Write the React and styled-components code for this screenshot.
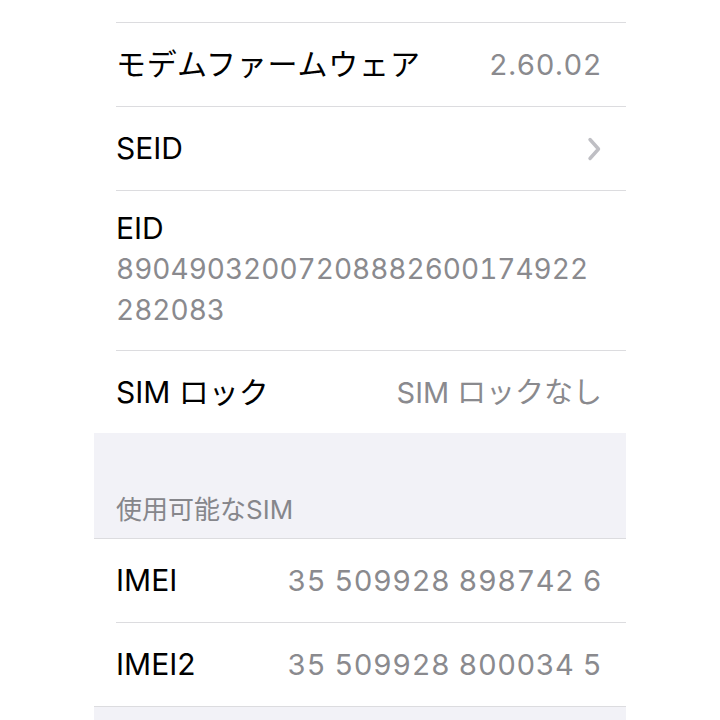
import React from 'react';
import styled, { createGlobalStyle } from 'styled-components';

const GlobalStyle = createGlobalStyle`
  body {
    margin: 0;
    background: #ffffff;
    font-family: 'Inter', 'Noto Sans CJK JP', sans-serif;
    -webkit-font-smoothing: antialiased;
  }
`;

const Chevron = () => (
  <svg width="16" height="26" viewBox="0 0 16 26" fill="none">
    <path
      d="M4 3.5 L12.5 13 L4 22.5"
      stroke="#bfbfc4"
      strokeWidth="3.4"
      strokeLinecap="round"
      strokeLinejoin="round"
    />
  </svg>
);

const App = () => {
  return (
    <Page>
      <GlobalStyle />
      <Screen>
        <Group>
          <Row>
            <Cell $height={22} />
          </Row>
          <Row>
            <Cell>
              <Label $spacing={0.8}>モデムファームウェア</Label>
              <Value $spacing={0.5}>2.60.02</Value>
            </Cell>
          </Row>
          <Row>
            <Cell>
              <Label>SEID</Label>
              <Chevron />
            </Cell>
          </Row>
          <Row>
            <StackCell>
              <Label>EID</Label>
              <LongValue>
                <span>89049032007208882600174922</span>
                <span>282083</span>
              </LongValue>
            </StackCell>
          </Row>
          <Row>
            <Cell $last $height={82}>
              <Label>SIM ロック</Label>
              <Value>SIM ロックなし</Value>
            </Cell>
          </Row>
        </Group>

        <SectionHeader>使用可能なSIM</SectionHeader>

        <Group $bordered>
          <Row>
            <Cell>
              <Label>IMEI</Label>
              <Value $spacing={0.5}>35 509928 898742 6</Value>
            </Cell>
          </Row>
          <Row>
            <Cell $last>
              <Label>IMEI2</Label>
              <Value $spacing={0.5}>35 509928 800034 5</Value>
            </Cell>
          </Row>
        </Group>
        <Footer />
      </Screen>
    </Page>
  );
};
export default App;

const Page = styled.div`
  width: 720px;
  height: 720px;
  overflow: hidden;
  background: #ffffff;
  display: flex;
`;

const Screen = styled.div`
  margin-left: 94px;
  width: 532px;
  display: flex;
  flex-direction: column;
  background: #f2f2f7;
`;

const Group = styled.div`
  background: #ffffff;
  display: flex;
  flex-direction: column;
  border-top: ${({ $bordered }) => ($bordered ? '1px solid #dcdcdf' : 'none')};
  border-bottom: ${({ $bordered }) => ($bordered ? '1px solid #dcdcdf' : 'none')};
`;

const Row = styled.div`
  padding-left: 22px;
`;

const Cell = styled.div`
  height: ${({ $height }) => ($height ? `${$height}px` : '83px')};
  display: flex;
  align-items: center;
  justify-content: space-between;
  padding-right: 24px;
  border-bottom: ${({ $last }) => ($last ? 'none' : '1px solid #dcdcdf')};
`;

const StackCell = styled.div`
  display: flex;
  flex-direction: column;
  padding: 17px 24px 19px 0;
  border-bottom: 1px solid #dcdcdf;
`;

const Label = styled.span`
  font-size: 30px;
  line-height: 41px;
  color: #000000;
  letter-spacing: ${({ $spacing }) => ($spacing ? `${$spacing}px` : '0')};
  white-space: nowrap;
`;

const Value = styled.span`
  font-size: 29px;
  line-height: 41px;
  color: #8a8a8e;
  letter-spacing: ${({ $spacing }) => ($spacing ? `${$spacing}px` : '0')};
  font-variant-numeric: tabular-nums;
  white-space: nowrap;
`;

const LongValue = styled.div`
  display: flex;
  flex-direction: column;
  font-size: 28px;
  line-height: 41px;
  color: #8a8a8e;
  font-variant-numeric: tabular-nums;
  white-space: nowrap;
`;

const SectionHeader = styled.div`
  height: 105px;
  box-sizing: border-box;
  display: flex;
  align-items: flex-end;
  padding: 0 22px 11px;
  font-size: 26px;
  line-height: 34px;
  color: #86868b;
`;

const Footer = styled.div`
  flex: 1;
  background: #f2f2f7;
`;
